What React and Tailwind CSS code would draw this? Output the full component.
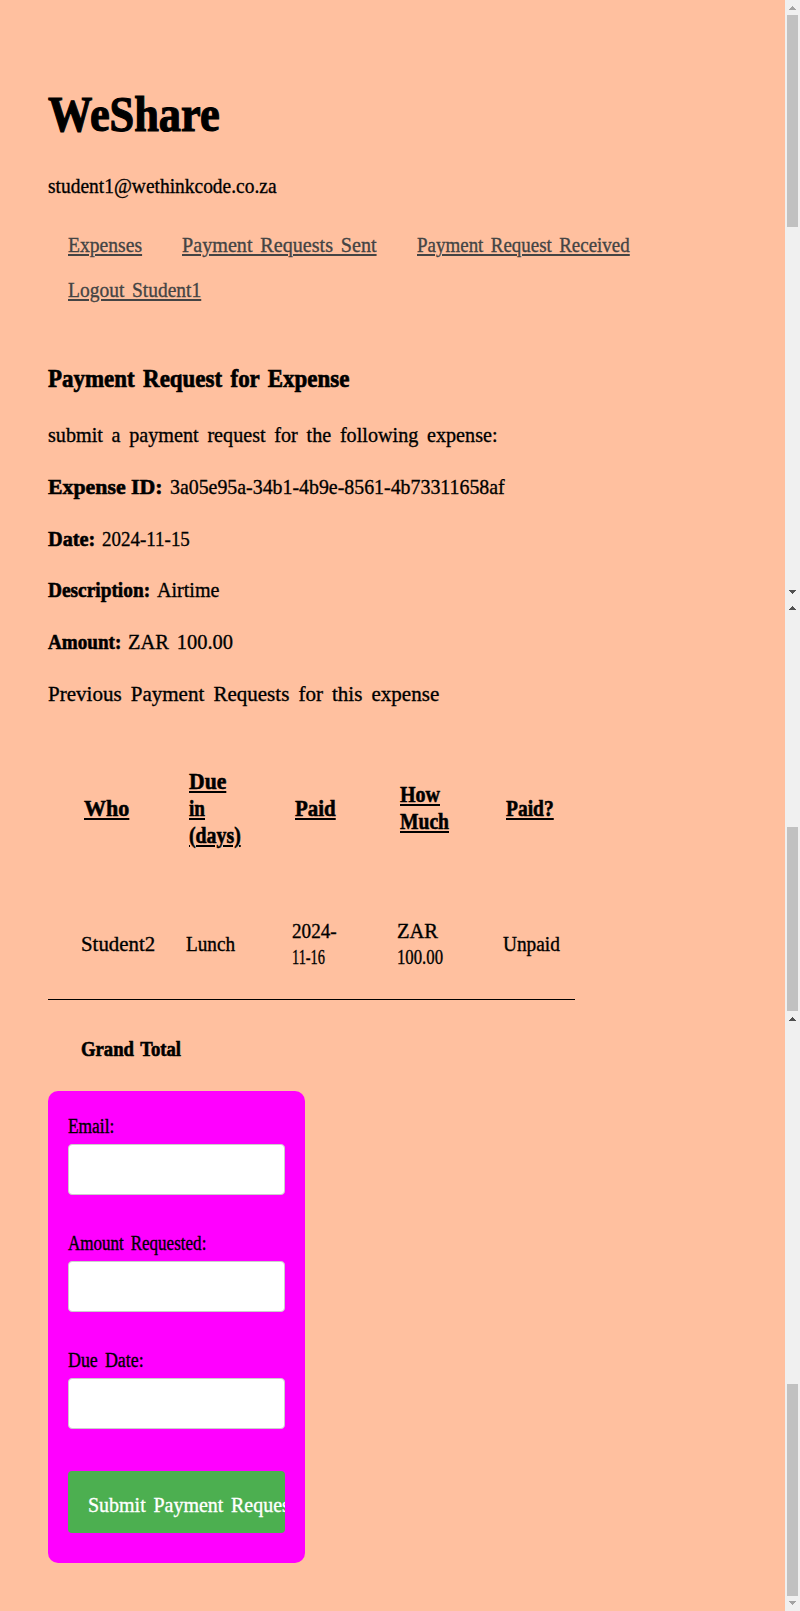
import { useLayoutEffect, useRef, useState } from "react";

// Condenses a line of text so that it takes up a given width.
function Line({ w, className = "", children }) {
  const ref = useRef(null);
  const [scale, setScale] = useState(1);
  useLayoutEffect(() => {
    setScale(w / ref.current.offsetWidth);
  }, [w, children]);
  return (
    <span className="block whitespace-nowrap" style={{ width: w }}>
      <span
        ref={ref}
        className={`inline-block origin-left align-top ${className}`}
        style={{ transform: `scaleX(${scale})` }}
      >
        {children}
      </span>
    </span>
  );
}

const links = [
  ["Expenses", 74],
  ["Payment Requests Sent", 195],
  ["Payment Request Received", 213],
  ["Logout Student1", 133],
];

const details = [
  ["Expense ID:", 115, "3a05e95a-34b1-4b9e-8561-4b73311658af", 335],
  ["Date:", 47, "2024-11-15", 88],
  ["Description:", 102, "Airtime", 62],
  ["Amount:", 73, "ZAR 100.00", 105],
];

const headers = [
  [["Who", 45]],
  [["Due", 37], ["in", 16], ["(days)", 52]],
  [["Paid", 41]],
  [["How", 40], ["Much", 49]],
  [["Paid?", 48]],
];

const cells = [
  [["Student2", 74]],
  [["Lunch", 49]],
  [["2024-", 45], ["11-16", 33]],
  [["ZAR", 41], ["100.00", 46]],
  [["Unpaid", 57]],
];

const fields = [
  ["Email:", 46],
  ["Amount Requested:", 138],
  ["Due Date:", 76],
];

function Arrow({ down, faint }) {
  return (
    <svg
      width="7"
      height="4"
      viewBox="0 0 7 4"
      shapeRendering="crispEdges"
      className={faint ? "fill-[#a3a3a3]" : "fill-[#505050]"}
    >
      {down ? (
        <path d="M0 0h7v1H0zM1 1h5v1H1zM2 2h3v1H2zM3 3h1v1H3z" />
      ) : (
        <path d="M3 0h1v1H3zM2 1h3v1H2zM1 2h5v1H1zM0 3h7v1H0z" />
      )}
    </svg>
  );
}

function Scrollbars() {
  return (
    <div className="flex w-[15px] shrink-0 flex-col items-center bg-[#f0f0f0]">
      <div className="flex h-[596px] flex-col items-center pt-[6px]">
        <Arrow faint />
        <div className="mt-[5px] h-[212px] w-[11px] bg-[#c1c1c1]" />
        <div className="mt-[363px] flex"><Arrow down /></div>
      </div>
      <div className="flex h-[416px] flex-col items-center pt-[10px]">
        <Arrow />
        <div className="mt-[217px] h-[184px] w-[11px] bg-[#c1c1c1]" />
      </div>
      <div className="flex flex-col items-center pt-[5px]">
        <Arrow />
        <div className="mt-[363px] h-[212px] w-[11px] bg-[#c1c1c1]" />
        <div className="mt-[5px] flex"><Arrow down faint /></div>
      </div>
    </div>
  );
}

export default function App() {
  return (
    <div className="flex h-[1611px] w-[800px] overflow-hidden bg-[#ffc09f] font-['Liberation_Serif',serif] text-[22px] leading-[28px] text-black [-webkit-text-stroke-width:0.35px]">
      <main className="flex-1 pt-[84px] pl-[48px]">
        <h1 className="text-[50px] leading-[60px] font-bold [-webkit-text-stroke-width:1.2px]">
          <Line w={172}>WeShare</Line>
        </h1>
        <div className="mt-[28px]">
          <Line w={229}>student1@wethinkcode.co.za</Line>
        </div>

        <nav className="mt-[31px] flex w-[660px] flex-wrap gap-y-[17px]">
          {links.map(([label, w]) => (
            <a key={label} href="#" className="px-[20px] text-[#444444]">
              <Line w={w} className="underline decoration-2 underline-offset-2 [word-spacing:3px]">{label}</Line>
            </a>
          ))}
        </nav>

        <h2 className="mt-[59px] text-[26px] leading-[32px] font-bold [-webkit-text-stroke-width:0.7px]">
          <Line w={301} className="[word-spacing:3px]">Payment Request for Expense</Line>
        </h2>

        <section className="mt-[26px] flex flex-col gap-[23.8px]">
          <Line w={450} className="[word-spacing:4px]">submit a payment request for the following expense:</Line>
          {details.map(([label, lw, value, vw]) => (
            <div key={label} className="flex gap-[7px]">
              <strong className="[-webkit-text-stroke-width:0.6px]">
                <Line w={lw}>{label}</Line>
              </strong>
              <Line w={vw} className="[word-spacing:3px]">{value}</Line>
            </div>
          ))}
          <Line w={391} className="[word-spacing:4px]">Previous Payment Requests for this expense</Line>
        </section>

        <section className="mt-[20px] w-[527px]">
          <div className="grid h-[160px] grid-cols-5 items-center pt-px text-[24px] leading-[27.3px] font-bold [-webkit-text-stroke-width:0.6px]">
            {headers.map((lines, i) => (
              <div key={i} className="pl-[36px]">
                {lines.map(([t, w]) => (
                  <Line key={t} w={w} className="underline decoration-2 underline-offset-2">{t}</Line>
                ))}
              </div>
            ))}
          </div>
          <div className="grid h-[112px] grid-cols-5 items-center border-b border-black pt-[2px] text-[20px] leading-[26.3px]">
            {cells.map((lines, i) => (
              <div key={i} className="pl-[33px]">
                {lines.map(([t, w]) => (
                  <Line key={t} w={w}>{t}</Line>
                ))}
              </div>
            ))}
          </div>
          <div className="h-[91px] pt-[36px] pl-[33px] text-[20px] leading-[26px] font-bold [-webkit-text-stroke-width:0.6px]">
            <Line w={100} className="[word-spacing:2px]">Grand Total</Line>
          </div>
        </section>

        <form className="h-[472px] w-[257px] rounded-[10px] bg-[#ff00ff] px-[20px] pt-[22px]">
          <div className="flex flex-col gap-[35px] text-[20px] leading-[26px]">
            {fields.map(([label, w]) => (
              <label key={label} className="block">
                <Line w={w} className="[word-spacing:3px]">{label}</Line>
                <input className="mt-[5px] block h-[51px] w-full rounded-[4px] border border-[#cccccc] bg-white" />
              </label>
            ))}
          </div>
          <button
            type="button"
            className="mt-[42px] block h-[62px] w-full overflow-hidden rounded-[4px] bg-[#4caf50] pt-[6px] pl-[20px] text-left text-white"
          >
            <Line w={207} className="[word-spacing:3px]">Submit Payment Request</Line>
          </button>
        </form>
      </main>
      <Scrollbars />
    </div>
  );
}
